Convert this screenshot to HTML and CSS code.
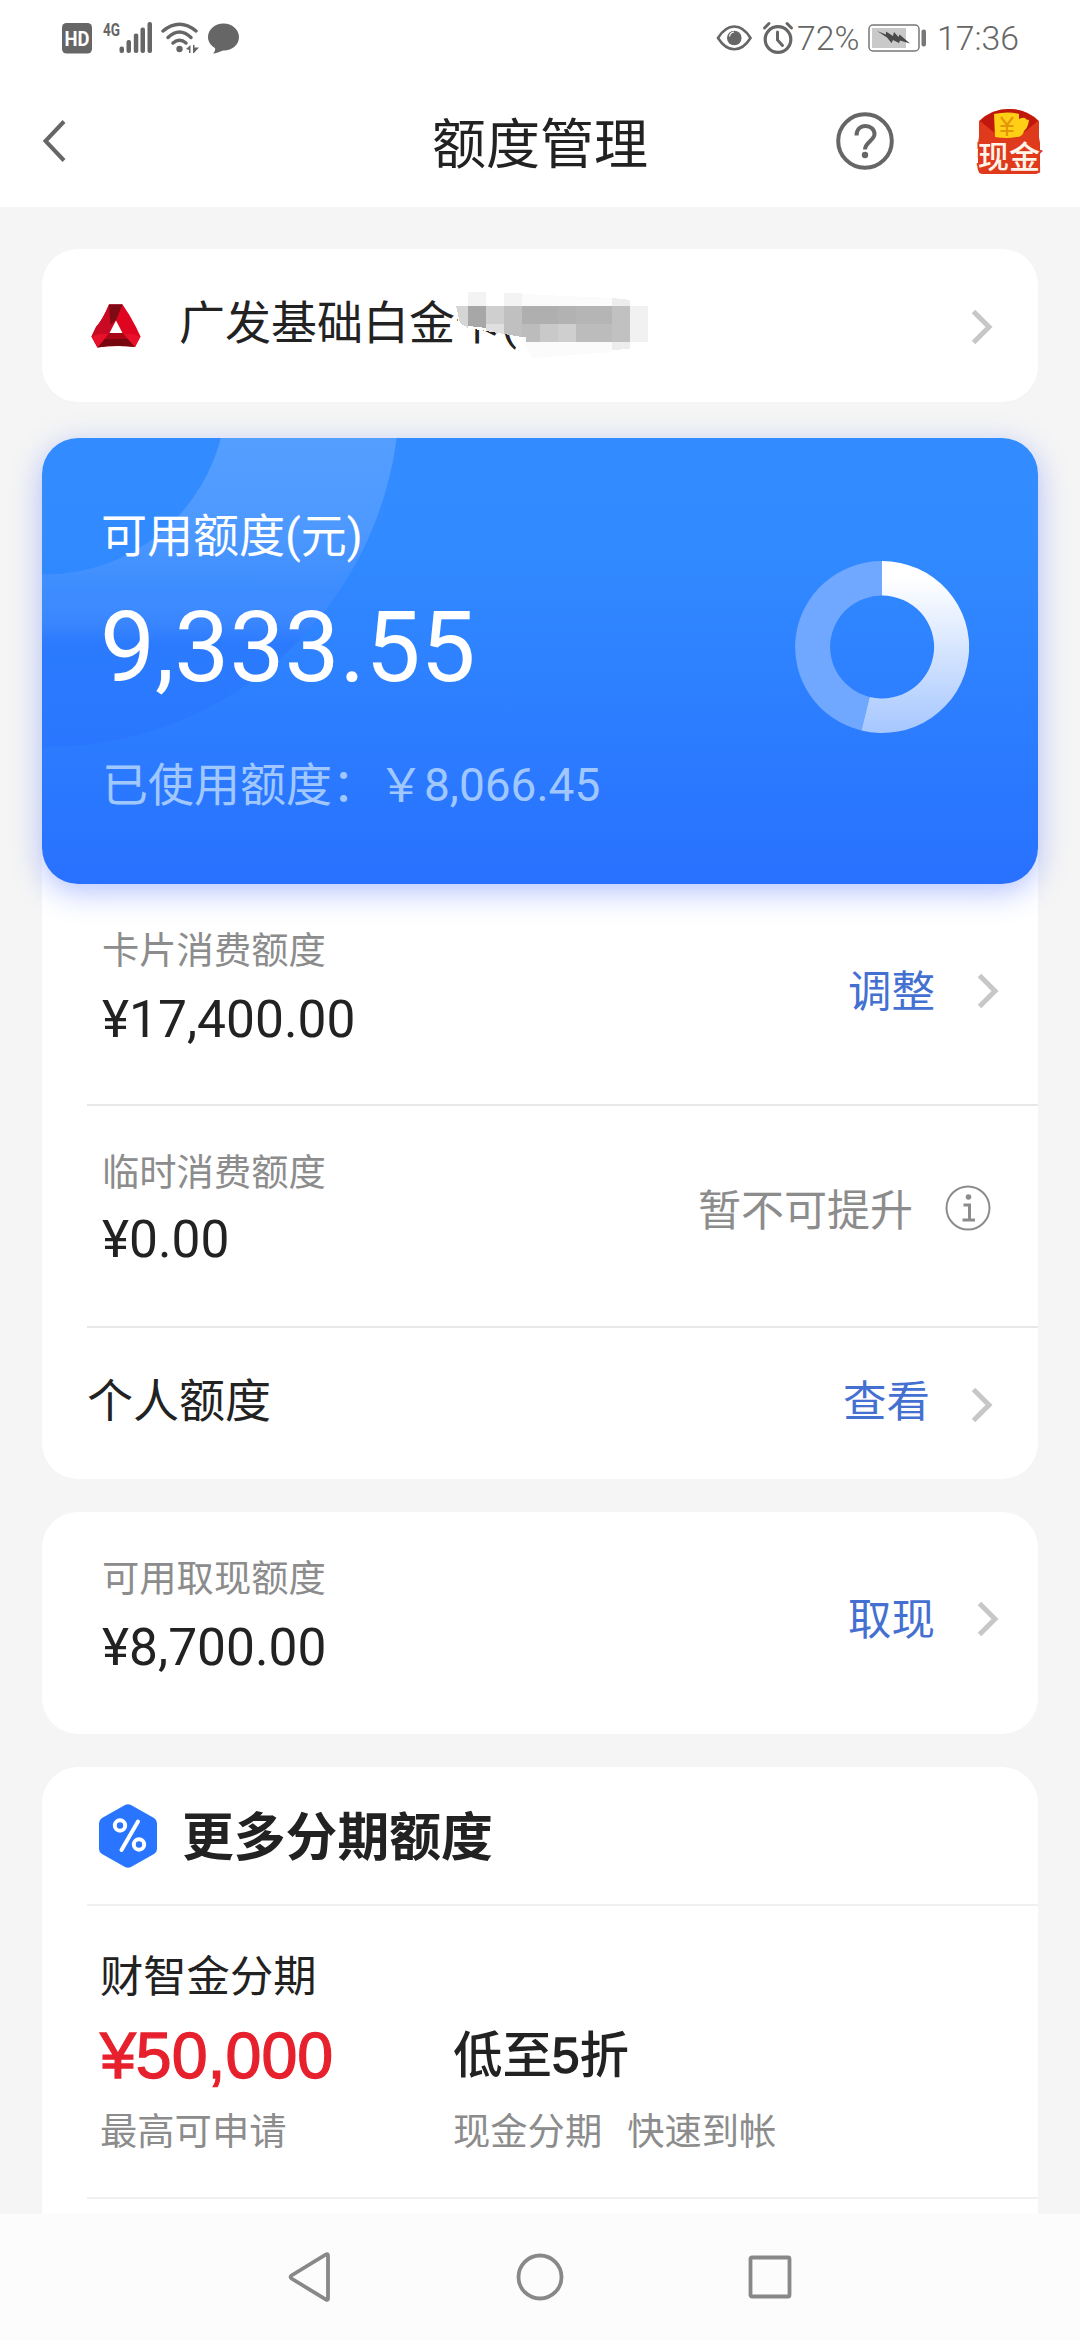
FILE: index.html
```html
<!DOCTYPE html>
<html lang="zh-CN">
<head>
<meta charset="utf-8">
<title>额度管理</title>
<link rel="stylesheet" href="styles.css">
</head>
<body>
<svg class="defs" width="0" height="0">
  <symbol id="chevron" viewBox="0 0 22 36"><path d="M2.5 2.5 18 18 2.5 33.500" fill="none" stroke="#c7c7c9" stroke-width="5"/></symbol>
</svg>
<div class="screen">
  <header class="top">
    <div class="status">
      <svg class="status-left" width="180" height="34" viewBox="0 0 180 34">
        <rect x="2" y="3" width="30" height="30.500" rx="4.500" fill="#666"/>
        <text x="17" y="25.500" class="hd" text-anchor="middle" textLength="25" lengthAdjust="spacingAndGlyphs">HD</text>
        <text x="43" y="15.500" class="net" textLength="17" lengthAdjust="spacingAndGlyphs">4G</text>
        <g fill="#666">
          <rect x="59.500" y="26.500" width="4.500" height="6.500" rx="2"/>
          <rect x="66.500" y="20" width="4.500" height="13" rx="2"/>
          <rect x="73.800" y="13.500" width="4.500" height="19.500" rx="2"/>
          <rect x="80.500" y="7.500" width="4.500" height="25.500" rx="2"/>
          <rect x="87.500" y="2" width="4.500" height="31" rx="2"/>
        </g>
        <g fill="none" stroke="#666" stroke-width="3.500" stroke-linecap="round">
          <path d="M103 11Q119.500-2.500 136 11"/>
          <path d="M108 17.500Q119.500 6.500 131 17.500"/>
          <path d="M113 23Q119.500 17.500 126 23"/>
        </g>
        <circle cx="119.500" cy="29" r="3.200" fill="#666"/>
        <path d="M126 29l4.500-4v8h-1.500v-3zM133 25h1.500v2.500l4.500 0-5 5.500h-1z" fill="#666"/>
        <path d="M163.500 3.500c8.500 0 15.500 6 15.500 13.500 0 8-7 13.500-15 13.500-3 0-4.500 2.500-11 3 2-2 2.500-3.500 2-5.500C150.500 25.500 148 21.500 148 17c0-7.500 7-13.500 15.500-13.500z" fill="#666"/>
      </svg>
      <div class="status-right">
        <svg width="78" height="34" viewBox="0 0 78 34">
          <path d="M2 18Q9 6.500 18.300 6.500T34.500 18Q27.500 29.300 18.300 29.300T2 18z" fill="none" stroke="#666" stroke-width="2.600"/>
          <circle cx="18.300" cy="18" r="7.300" fill="#666"/><path d="M13.500 16.500q.5-4 4.500-4.500" fill="none" stroke="#fff" stroke-width="1.200"/>
          <circle cx="62" cy="19.500" r="12.800" fill="none" stroke="#666" stroke-width="3.200"/>
          <path d="M61.500 12v8l5 5.500M48.500 8l4.500-4.500M75.500 8 71 3.500" fill="none" stroke="#666" stroke-width="3" stroke-linecap="round"/>
        </svg>
        <span class="pct">72%</span>
        <svg class="battery" width="60" height="34" viewBox="0 0 60 34">
          <rect x="1" y="5" width="50" height="26" rx="4" fill="#fff" stroke="#777" stroke-width="1.500"/>
          <rect x="4" y="8" width="34" height="20" fill="#c9c9c9"/>
          <path d="M9 11l9 3.500v-3l7 4.500 1-4 4.500 5 1-2.500L42 23.500l-10-3-1 2.500-6-3-1.500 3-4.500-5.500z" fill="#4a4a4a"/>
          <rect x="53.500" y="9.500" width="4.500" height="17" rx="2" fill="#777"/>
        </svg>
        <span class="clock">17:36</span>
      </div>
    </div>
    <div class="titlebar">
      <svg class="back" width="24" height="42" viewBox="0 0 24 42"><path d="M22 1.500 3.500 21 22 40.500" fill="none" stroke="#666" stroke-width="4"/></svg>
      <h1>额度管理</h1>
      <div class="tools">
        <svg width="58" height="58" viewBox="0 0 58 58">
          <circle cx="29" cy="29" r="26.800" fill="none" stroke="#666" stroke-width="4"/>
          <path d="M20.500 23.500C20.500 17.500 24.500 14 29.500 14S38.500 17.500 38.500 22c0 6.500-9.500 8-9.500 15.500" fill="none" stroke="#666" stroke-width="4"/>
          <circle cx="29" cy="43" r="3.200" fill="#666"/>
        </svg>
        <svg class="packet" width="68" height="84" viewBox="0 0 68 84">
          <path d="M5 22Q17 10 35 10t30 12v16l1 6v26q0 5-5 5H9q-5 0-5-5V44l1-6z" fill="#e03a1d"/>
          <path d="M6 22Q18 10 35 10t29 12L43 39H27z" fill="#c0180d"/>
          <path d="M20 15q14-3 25 0v5q4-2 6-1 1 2 4 2-1 8-5 11-1 5-6 6-12 2-23 0z" fill="#ffcf16"/>
          <path d="M27 18l6 8 6-8M33 26v11M26.500 27h13M26.500 32h13" fill="none" stroke="#e4960b" stroke-width="2.200"/>
          <text x="35" y="68.500" text-anchor="middle" class="cash">现金</text>
        </svg>
      </div>
    </div>
  </header>

  <main>
    <section class="card account">
      <svg width="52" height="46" viewBox="0 0 52 46">
        <path d="M19 1.500H32.500Q40 12 46 24L50.500 33.500 45 44Q26 42 7.500 44.500L1.500 33.500 6 24Q12.500 17 19 1.500z" fill="#df0420"/>
        <path d="M19 1.500H32.500L26 17 19.500 30 7.500 44.500 1.500 33.500 6 24Q12.500 17 19 1.500z" fill="#c90a22"/>
        <path d="M19 1.500H32.500L26 17 20.500 22z" fill="#7d0a14"/>
        <path d="M19.500 30H32.500L45 44Q26 42 7.500 44.500z" fill="#78060f"/>
        <path d="M19.500 30H32.500L38 36H14z" fill="#a80718"/>
        <path d="M1.500 33.500 9 31H18.500L7.500 44.500zM50.500 33.500 43 31H33.500L45 44z" fill="#e8102a"/>
        <path d="M26 17.500 19.500 30H32.500z" fill="#fff"/>
      </svg>
      <div class="account-name">广发基础白金卡(
        <svg class="mask" width="212" height="80" viewBox="0 0 212 80" shape-rendering="crispEdges">
          <path d="M17 0V38L20 43 28 48 85 57 86 78H212V0z" fill="#fff"/>
          <path d="M82 14 172 18V72L92 78 82 58z" fill="#fbfbfb"/>
          <path d="M28 12h18v14H28zM64 13h18v13H64z" fill="#f3f3f3"/>
          <path d="M172 18 190 20V69L172 70z" fill="#ededed"/>
          <path d="M16 26H28V48L20 43z" fill="#d5d5d5"/>
          <path d="M28 26h18v22l-18-2z" fill="#a7a7a7"/>
          <path d="M46 26h18v18H46z" fill="#cfcfcf"/>
          <path d="M46 44h18v10l-18-3z" fill="#e0e0e0"/>
          <path d="M64 26h18v31l-18-3z" fill="#c0c0c0"/>
          <path d="M82 26h36v18H82z" fill="#afafaf"/>
          <path d="M118 26h18v18h-18z" fill="#b2b2b2"/>
          <path d="M136 26h36v18h-36z" fill="#b5b5b5"/>
          <path d="M172 26h18v36h-18z" fill="#c1c1c1"/>
          <path d="M190 26h18v36h-18z" fill="#f1f1f1"/>
          <path d="M82 44h18v18H86v-5h-4z" fill="#bcbcbc"/>
          <path d="M100 44h18v18h-18z" fill="#c9c9c9"/>
          <path d="M118 44h18v18h-18z" fill="#cfcfcf"/>
          <path d="M136 44h36v18h-36z" fill="#bcbcbc"/>
        </svg>
      </div>
      <svg class="chev" width="22" height="36"><use href="#chevron"/></svg>
    </section>

    <section class="card limits">
      <div class="hero">
        <svg class="rings" width="360" height="320" viewBox="0 0 360 320">
          <defs><linearGradient id="ring" x1="0" y1="0" x2="0" y2="310" gradientUnits="userSpaceOnUse">
            <stop offset="0" stop-color="#fff" stop-opacity=".16"/>
            <stop offset=".3" stop-color="#f4f0ff" stop-opacity=".14"/>
            <stop offset=".5" stop-color="#b0b8ff" stop-opacity=".1"/>
            <stop offset=".66" stop-color="#2468fb" stop-opacity=".3"/>
            <stop offset="1" stop-color="#2468fb" stop-opacity=".22"/>
          </linearGradient></defs>
          <circle cx="3" cy="-45" r="268" fill="none" stroke="url(#ring)" stroke-width="173"/>
        </svg>
        <div class="hero-text">
          <div class="hero-label">可用额度(元)</div>
          <div class="hero-value">9,333.55</div>
          <div class="hero-used">已使用额度：￥8,066.45</div>
        </div>
        <svg class="donut" width="174" height="172" viewBox="0 0 174 174" preserveAspectRatio="none">
          <defs><linearGradient id="used" x1="0" y1="0" x2="0" y2="174" gradientUnits="userSpaceOnUse">
            <stop offset=".1" stop-color="#fff"/><stop offset="1" stop-color="#a6c7ff"/>
          </linearGradient></defs>
          <path d="M66.400 171.500A87 87 0 0 1 87 0V35A52 52 0 0 0 74.700 137.500z" fill="#70a8ff"/>
          <path d="M87 0A87 87 0 1 1 66.400 171.500L74.700 137.500A52 52 0 1 0 87 35z" fill="url(#used)"/>
        </svg>
      </div>
      <div class="row line">
        <div class="pair"><div class="label">卡片消费额度</div><div class="value">¥17,400.00</div></div>
        <div class="action">调整<svg class="chev" width="22" height="36"><use href="#chevron"/></svg></div>
      </div>
      <div class="row line temp">
        <div class="pair"><div class="label">临时消费额度</div><div class="value">¥0.00</div></div>
        <div class="action muted">暂不可提升
          <svg width="46" height="46" viewBox="0 0 46 46"><circle cx="23" cy="23" r="21.500" fill="none" stroke="#8c8c8c" stroke-width="2"/><circle cx="23.500" cy="12" r="2.800" fill="#8c8c8c"/><path d="M18.500 20h6v14.500M17.500 35h12.500" fill="none" stroke="#8c8c8c" stroke-width="3"/></svg>
        </div>
      </div>
      <div class="row personal">
        <div class="name">个人额度</div>
        <div class="action">查看<svg class="chev" width="22" height="36"><use href="#chevron"/></svg></div>
      </div>
    </section>

    <section class="card cash-limit">
      <div class="row">
        <div class="pair"><div class="label">可用取现额度</div><div class="value">¥8,700.00</div></div>
        <div class="action">取现<svg class="chev" width="22" height="36"><use href="#chevron"/></svg></div>
      </div>
    </section>

    <section class="card more">
      <div class="more-head">
        <svg width="60" height="66" viewBox="0 0 60 66">
          <path d="M27 2q3-1.500 6 0l23 13q3 2 3 5v26q0 3-3 5L33 64q-3 1.500-6 0L4 51q-3-2-3-5V20q0-3 3-5z" fill="#2975ff"/>
          <g fill="none" stroke="#fff" stroke-width="4"><circle cx="22" cy="22.500" r="5.200"/><circle cx="41" cy="41.500" r="5.200"/><path d="M40 18.500 23.500 47" stroke-linecap="round"/></g>
        </svg>
        <h2>更多分期额度</h2>
      </div>
      <div class="offer">
        <div class="offer-name">财智金分期</div>
        <div class="offer-grid">
          <div class="price">¥50,000</div>
          <div class="rate">低至<span class="num">5</span>折</div>
          <div class="note">最高可申请</div>
          <div class="note tags"><span>现金分期</span><span>快速到帐</span></div>
        </div>
      </div>
    </section>
  </main>

  <nav class="sysnav">
    <svg width="46" height="50" viewBox="0 0 46 50"><path d="M41 3.500V46.500Q41 48.500 39 47.500L4.500 26.500Q2.500 25 4.500 23.500L39 2.500Q41 1.500 41 3.500z" fill="none" stroke="#888" stroke-width="3.800"/></svg>
    <svg width="50" height="50" viewBox="0 0 50 50"><circle cx="25" cy="25" r="21.500" fill="none" stroke="#888" stroke-width="3.800"/></svg>
    <svg width="46" height="46" viewBox="0 0 46 46"><rect x="3.500" y="3.500" width="39" height="39" rx="1.500" fill="none" stroke="#888" stroke-width="3.800"/></svg>
  </nav>
</div>
</body>
</html>
```

FILE: styles.css
```css
* { box-sizing: border-box; margin: 0; padding: 0; }
body {
  background: #f5f5f5;
  color: #222;
  font-family: Roboto, "Noto Sans CJK SC", sans-serif;
}
svg { display: block; flex: none; }
.defs { position: absolute; }
.screen {
  width: 1080px;
  height: 2340px;
  overflow: hidden;
  display: flex;
  flex-direction: column;
}

/* Header */
.top { height: 207px; flex: none; background: #fff; }
.status {
  height: 75px;
  padding: 20px 61px 0 60px;
  display: flex;
  justify-content: space-between;
  align-items: flex-start;
}
.status-right { display: flex; color: #666; font-size: 33.800px; line-height: 37px; font-weight: 350; }
.pct { width: 66px; margin-left: 3px; }
.battery { margin-left: 5px; }
.clock { margin-left: 9px; }
.hd { font: 700 20px Roboto, sans-serif; fill: #fff; }
.net { font: 700 18px Roboto, sans-serif; fill: #666; }
.titlebar {
  height: 132px;
  padding: 0 38px 0 42px;
  display: grid;
  grid-template-columns: 1fr 216px 1fr;
  align-items: center;
}
.titlebar h1 {
  font-weight: 400;
  font-size: 54px;
  line-height: 72px;
  margin: 9px 0 0 -2px;
  white-space: nowrap;
}
.tools { display: flex; justify-content: flex-end; align-items: center; gap: 80px; }
.packet { overflow: visible; }
.cash {
  font: 500 31px "Noto Sans CJK SC", sans-serif;
  fill: #fff4ea;
  stroke: #e03a1d;
  stroke-width: 4px;
  paint-order: stroke;
}

/* Cards */
main { flex: 1; min-height: 0; overflow: hidden; padding: 42px 42px 0; }
.card { background: #fff; border-radius: 36px; }
.account {
  height: 153px;
  padding: 0 45px 0 48px;
  display: flex;
  align-items: center;
}
.account-name {
  position: relative;
  flex: 1;
  margin: -5px 0 0 37px;
  font-size: 46px;
  line-height: 60px;
  white-space: nowrap;
}
.mask { position: absolute; left: 261px; top: -13px; }
.account .chev { margin-top: 3px; }

.limits { position: relative; margin-top: 36px; height: 1041px; }
.limits::before {
  content: "";
  position: absolute;
  inset: 0 0 auto;
  height: 446px;
  border-radius: 36px;
  box-shadow: 0 8px 30px rgba(50, 90, 255, .36);
}
.hero {
  position: relative;
  height: 446px;
  padding: 63px 69px 0 59px;
  border-radius: 36px;
  overflow: hidden;
  display: flex;
  justify-content: space-between;
  background: linear-gradient(#338cff, #318aff 25%, #2871ff);
  color: #fff;
}
.rings { position: absolute; left: 0; top: 0; }
.hero-text { position: relative; }
.hero-label { font-size: 46px; line-height: 70px; }
.hero-value { font-size: 98px; line-height: 110px; margin: 22px 0 0 -1px; }
.hero-used { font-size: 46px; line-height: 70px; margin: 47px 0 0 1px; color: #a0c8ff; }
.donut { position: relative; margin-top: 60px; }

.row {
  height: 221px;
  margin-left: 45px;
  padding-left: 15px;
  display: flex;
  justify-content: space-between;
}
.line { border-bottom: 2px solid #e8e8e8; }
.limits .line { height: 222px; }
.pair { padding-top: 42px; }
.label { font-size: 37.300px; line-height: 50px; color: #8c8c8c; }
.value { font-size: 51.500px; line-height: 60px; margin-top: 14px; }
.temp .value { margin-top: 12px; }
.action {
  display: flex;
  align-items: center;
  height: 60px;
  margin-top: 79px;
  padding-right: 39px;
  font-size: 43.500px;
  line-height: 60px;
  color: #4470d2;
}
.action .chev { margin: -5px 0 0 42px; }
.muted { color: #8c8c8c; padding-right: 47px; margin-top: 75px; font-size: 43px; }
.muted svg { margin: -7px 0 0 32px; }
.personal { height: 151px; padding-left: 0; }
.personal .name { font-size: 46px; line-height: 60px; padding-top: 43px; }
.personal .action { margin-top: 45px; padding-right: 45px; }
.personal .action .chev { margin: 3px 0 0 41px; }

.cash-limit { margin-top: 33px; height: 222px; }

.more { margin-top: 33px; height: 500px; }
.more-head {
  height: 139px;
  margin-left: 45px;
  padding-left: 11px;
  border-bottom: 2px solid #f0f0f0;
  display: flex;
  align-items: center;
}
.more-head h2 { margin: 7px 0 0 24px; font-size: 51.800px; line-height: 70px; font-weight: 700; }
.offer {
  height: 293px;
  margin-left: 45px;
  padding: 42px 0 0 13px;
  border-bottom: 2px solid #f0f0f0;
}
.offer-name { font-size: 43.300px; line-height: 60px; }
.offer-grid {
  display: grid;
  grid-template-columns: 353px 1fr;
  grid-template-rows: 80px 54px;
  align-items: center;
  margin-top: 8px;
  row-gap: 9px;
}
.price {
  font-family: "Liberation Sans", Arial, sans-serif;
  font-size: 64.500px;
  line-height: 80px;
  color: #e6212d;
  -webkit-text-stroke: 1.300px #e6212d;
}
.rate { font-size: 49.500px; line-height: 80px; font-weight: 500; }
.num { font-family: "Liberation Sans", Arial, sans-serif; font-weight: 400; -webkit-text-stroke: 1.400px #222; }
.note { font-size: 37.300px; line-height: 50px; color: #8c8c8c; }
.tags { display: flex; gap: 25px; }

/* System navigation */
.sysnav {
  flex: none;
  height: 126px;
  background: #fcfcfc;
  display: flex;
  justify-content: center;
  align-items: center;
  gap: 182px;
}
```
